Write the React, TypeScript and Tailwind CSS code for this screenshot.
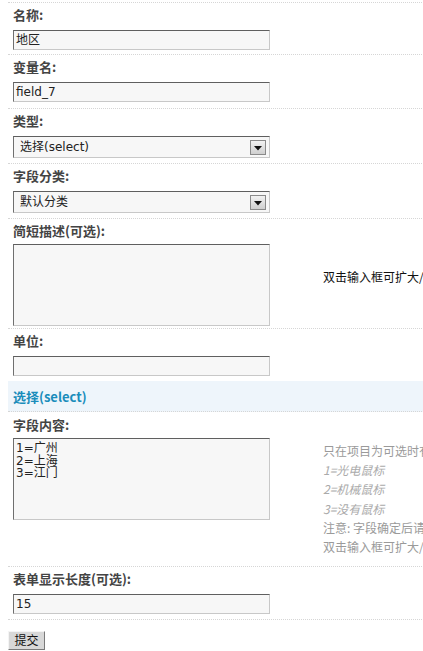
import React from "react"

const ff = { fontFamily: "'DejaVu Sans', 'Noto Sans CJK SC', sans-serif" }
const cjk = { fontFamily: "'Noto Sans CJK SC', sans-serif" }

function Label({ children }: { children: React.ReactNode }) {
  return (
    <div className="h-[24px] leading-[24px] text-[13px] font-bold text-[#444] pl-[5px]" style={cjk}>
      {children}
    </div>
  )
}

function TextBox({ value }: { value: string }) {
  return (
    <div
      className="ml-[5px] w-[257px] h-[20px] border border-t-[#5f5f5f] border-l-[#6f6f6f] border-r-[#c8c8c8] border-b-[#c8c8c8] bg-[#f7f7f7] px-[2px] text-[12px] leading-[18px] text-[#222]"
      style={ff}
    >
      {value}
    </div>
  )
}

function SelectBox({ value }: { value: string }) {
  return (
    <div className="ml-[5px] w-[257px] h-[22px] flex items-center justify-between border border-t-[#5f5f5f] border-l-[#6f6f6f] border-r-[#c8c8c8] border-b-[#c8c8c8] bg-[#f7f7f7] pl-[6px] pr-[3px]">
      <span className="text-[12px] leading-[18px] text-[#222]" style={ff}>
        {value}
      </span>
      <span className="w-[16px] h-[15px] border border-[#8a8a8a] bg-gradient-to-b from-[#f2f2f2] to-[#cfcfcf] flex items-center justify-center">
        <svg width="8" height="5" viewBox="0 0 8 5" className="mt-[2px]">
          <path d="M0 0H8L4 4.5Z" fill="#111" />
        </svg>
      </span>
    </div>
  )
}

function TextArea({ lines }: { lines?: string[] }) {
  return (
    <div
      className="ml-[5px] mt-[1px] w-[257px] h-[82px] border border-t-[#5f5f5f] border-l-[#6f6f6f] border-r-[#c8c8c8] border-b-[#c8c8c8] bg-[#f7f7f7] px-[2px] pt-[3px] text-[12px] leading-[12.5px] text-[#222]"
      style={ff}
    >
      {lines?.map((l) => (
        <div key={l}>{l}</div>
      ))}
    </div>
  )
}

const row = "flex border-b border-dotted border-[#d6d6d6]"

export default function App() {
  return (
    <div className="w-[423px] h-[651px] overflow-hidden bg-white" style={ff}>
      <div className="ml-[8px] w-[700px] pt-[2px]">
        <div className="border-t border-dotted border-[#d6d6d6]" />

        <div className={row}>
          <div className="w-[310px] pb-[4px]">
            <Label>名称:</Label>
            <div className="mt-[3px]">
              <TextBox value="地区" />
            </div>
          </div>
        </div>

        <div className={row}>
          <div className="w-[310px] pb-[6px]">
            <Label>变量名:</Label>
            <div className="mt-[3px]">
              <TextBox value="field_7" />
            </div>
          </div>
        </div>

        <div className={row}>
          <div className="w-[310px] pb-[5px]">
            <Label>类型:</Label>
            <div className="mt-[3px]">
              <SelectBox value="选择(select)" />
            </div>
          </div>
        </div>

        <div className={row}>
          <div className="w-[310px] pb-[5px]">
            <Label>字段分类:</Label>
            <div className="mt-[3px]">
              <SelectBox value="默认分类" />
            </div>
          </div>
        </div>

        <div className={row + " items-center"}>
          <div className="w-[310px] pb-[2px]">
            <Label>简短描述(可选):</Label>
            <TextArea />
          </div>
          <div className="pl-[5px] pt-[6px] text-[12px] text-[#111] whitespace-nowrap" style={cjk}>
            双击输入框可扩大/缩小
          </div>
        </div>

        <div className="flex">
          <div className="w-[310px] pb-[5px]">
            <Label>单位:</Label>
            <div className="mt-[3px]">
              <TextBox value="" />
            </div>
          </div>
        </div>

        <div
          className="h-[31px] bg-[#eef5fb] pl-[5px] pt-[2px] flex items-center border-b border-dotted border-[#d6d6d6] text-[13px] font-bold text-[#1a8dbb]"
          style={cjk}
        >
          选择(select)
        </div>

        <div className={row}>
          <div className="w-[310px] pt-[1px]">
            <Label>字段内容:</Label>
            <TextArea lines={["1=广州", "2=上海", "3=江门"]} />
          </div>
          <div className="pl-[5px] pt-[29px] pb-[10px] text-[12px] leading-[19.2px] text-[#9a9a9a] whitespace-nowrap" style={cjk}>
            <div>只在项目为可选时有效，每行一个选项，等号前面为选项索引</div>
            <div className="italic text-[#aaa]">1=光电鼠标</div>
            <div className="italic text-[#aaa]">2=机械鼠标</div>
            <div className="italic text-[#aaa]">3=没有鼠标</div>
            <div>注意: 字段确定后请勿修改索引和内容的对应关系</div>
            <div>双击输入框可扩大/缩小</div>
          </div>
        </div>

        <div className={row}>
          <div className="w-[310px] pb-[5px]">
            <Label>表单显示长度(可选):</Label>
            <div className="mt-[3px]">
              <TextBox value="15" />
            </div>
          </div>
        </div>

        <div className="pt-[8px]">
          <button
            className="w-[37px] h-[19px] bg-[#d8d8d8] border border-t-[#f4f4f4] border-l-[#f4f4f4] border-r-[#7a7a7a] border-b-[#7a7a7a] text-[12px] leading-[16px] text-[#111]"
            style={cjk}
          >
            提交
          </button>
        </div>
      </div>
    </div>
  )
}
